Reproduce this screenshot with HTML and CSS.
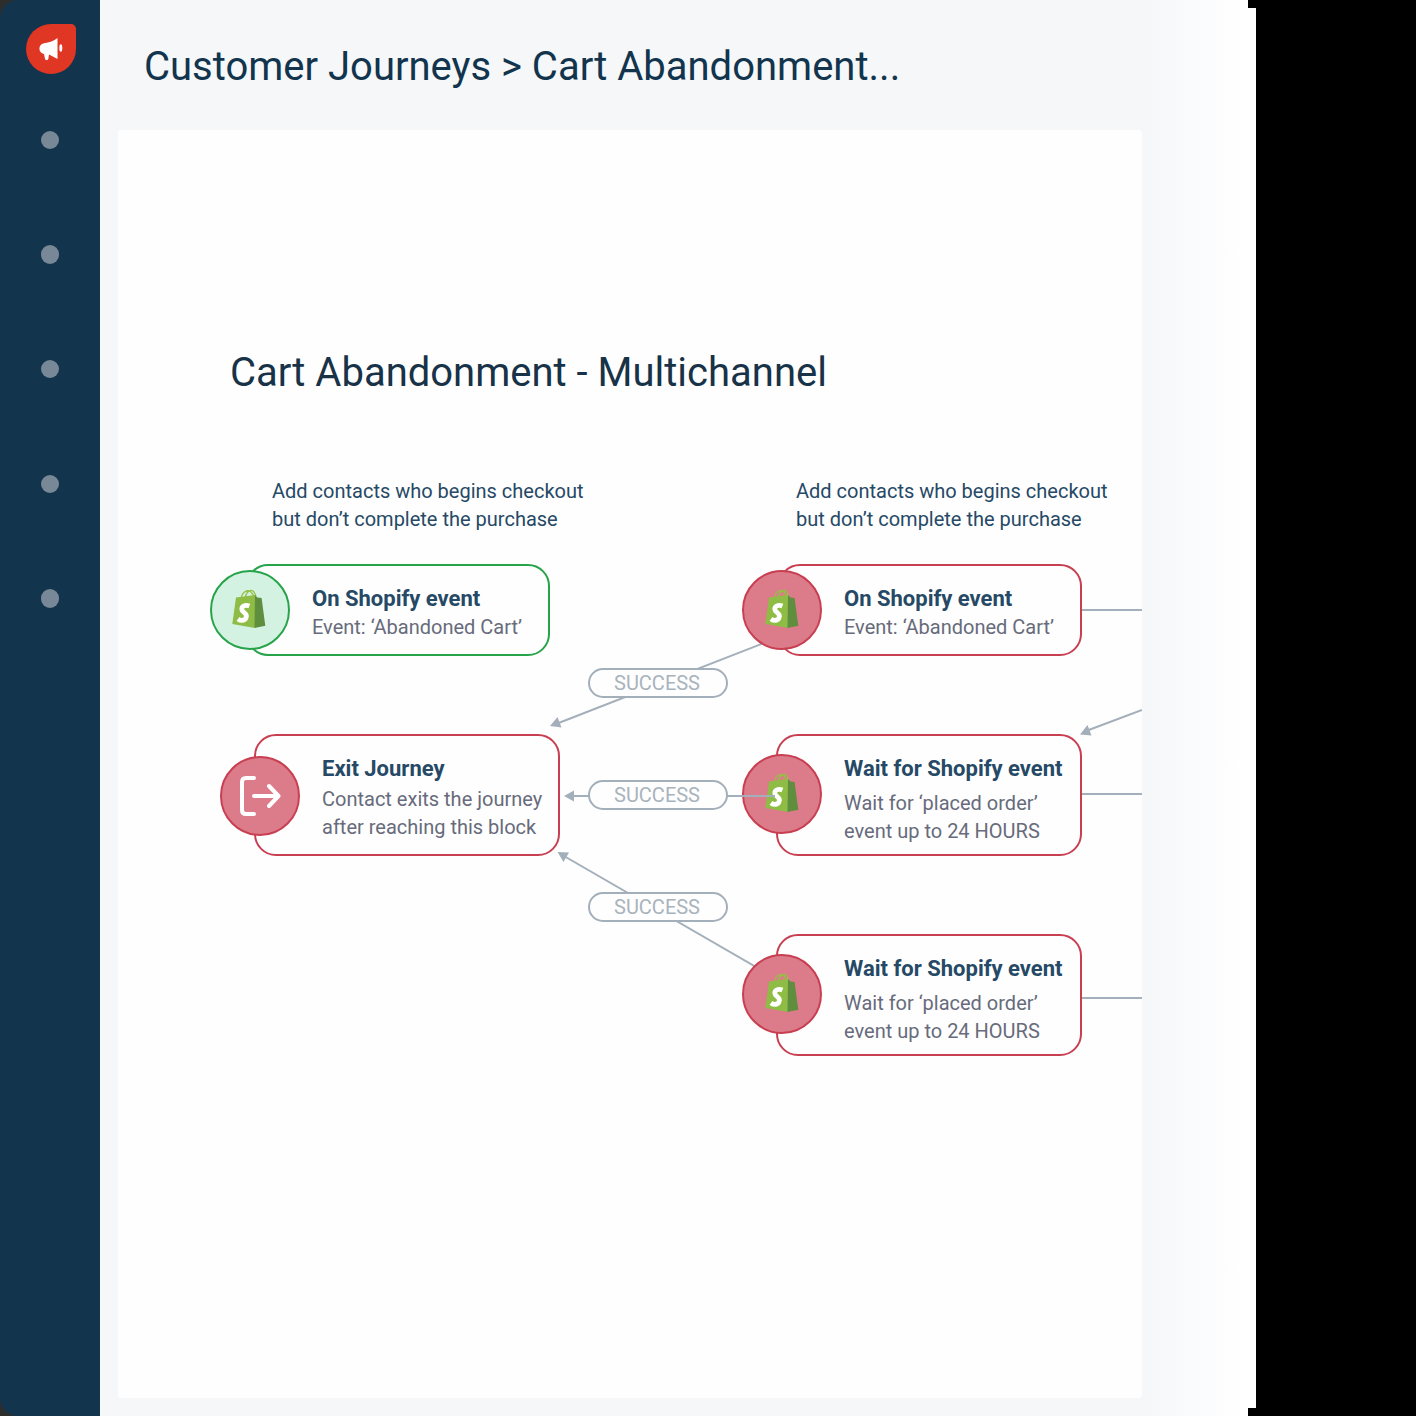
FILE: index.html
```html
<!DOCTYPE html>
<html lang="en">
<head>
<meta charset="utf-8">
<title>Customer Journeys</title>
<link rel="stylesheet" href="styles.css">
</head>
<body>
<svg class="defs" aria-hidden="true">
  <symbol id="bag" viewBox="0 0 80 80">
    <path d="M31 29C32 22 37 19 41 22C43 24 44 26 44 28M35 28C36 22 41 18 44 22L46 26" fill="none" stroke="#95bf47" stroke-width="1.3"/>
    <path d="M26 27.500L45 25V58L22.300 54Z" fill="#8ebc45"/>
    <path d="M45 25L47.500 27.500L51.600 28L55.300 55.700L44.500 58Z" fill="#5e8e3e"/>
    <path d="M39.400 36C35 34.300 31.600 36.200 31.800 39.300C32 42.300 36.600 42.500 36.400 46.200C36.200 50.400 31.500 51.600 28 49" fill="none" stroke="#fff" stroke-width="4.800"/>
  </symbol>
</svg>
<div class="window">
  <aside class="sidebar">
    <div class="logo">
      <svg viewBox="0 0 50 50"><path d="M31.500 14V35L23 30.500L22.500 34C22.300 37 19.400 36.500 19 35L18 30C12 29 11.800 20 18 19.200Q26 18.500 31.500 14Z" fill="#fff"/><ellipse cx="34.800" cy="24" rx="1.500" ry="3.800" fill="#fff"/></svg>
    </div>
    <nav class="dots"><i></i><i></i><i></i><i></i><i></i></nav>
  </aside>
  <main class="main">
    <header class="crumbs">Customer Journeys &gt; Cart Abandonment...</header>
    <section class="canvas">
      <h1 class="title">Cart Abandonment - Multichannel</h1>
      <p class="note note-a">Add contacts who begins checkout<br>but don’t complete the purchase</p>
      <p class="note note-b">Add contacts who begins checkout<br>but don’t complete the purchase</p>

      <svg class="wires" viewBox="118 130 1024 1268">
        <g stroke="#a3afba" stroke-width="2" fill="none">
          <path d="M782 636L556 724M782 982L564 856M1080 610H1142M1080 794H1142M1080 998H1142M1142 710L1086 731"/>
        </g>
        <g fill="#a3afba">
          <path d="M550 726L557.500 717L561.500 727.500ZM557.500 852L569 852.500L563.500 862ZM1080 734.500L1087.500 725L1091.500 735.500Z"/>
        </g>
      </svg>

      <article class="node green n1"><div class="badge"><svg><use href="#bag"/></svg></div><h2>On Shopify event</h2><p>Event: ‘Abandoned Cart’</p></article>
      <article class="node short n2"><div class="badge"><svg class="nudge"><use href="#bag"/></svg></div><h2>On Shopify event</h2><p>Event: ‘Abandoned Cart’</p></article>
      <article class="node exit n3"><div class="badge"><svg viewBox="0 0 80 80"><path d="M34 22H26Q22 22 22 26V54Q22 58 26 58H34M34 40H58M49 30L58.500 40L49 50" fill="none" stroke="#fff" stroke-width="4" stroke-linecap="round" stroke-linejoin="round"/></svg></div><h2>Exit Journey</h2><p>Contact exits the journey<br>after reaching this block</p></article>
      <article class="node wait n4"><div class="badge"><svg class="nudge"><use href="#bag"/></svg></div><h2>Wait for Shopify event</h2><p>Wait for ‘placed order’<br>event up to 24 HOURS</p></article>
      <article class="node wait n5"><div class="badge"><svg class="nudge"><use href="#bag"/></svg></div><h2>Wait for Shopify event</h2><p>Wait for ‘placed order’<br>event up to 24 HOURS</p></article>

      <svg class="wires" viewBox="118 130 1024 1268">
        <path d="M775 796H572" stroke="#a3afba" stroke-width="2"/><path d="M564 796L574 790.500V801.500Z" fill="#a3afba"/>
      </svg>
      <span class="pill p1">SUCCESS</span>
      <span class="pill p2">SUCCESS</span>
      <span class="pill p3">SUCCESS</span>
    </section>
  </main>
</div>
</body>
</html>
```
FILE: styles.css
```css
* { box-sizing: border-box; margin: 0; padding: 0; }
body { background: #000; font-family: Roboto, sans-serif; height: 1416px; overflow: hidden; }
.defs { position: absolute; width: 0; height: 0; }
.window {
  display: flex;
  width: 1256px;
  height: 1416px;
  background: #2e2d2d;
  clip-path: polygon(0 0, 1248px 0, 1248px 8px, 1256px 8px, 1256px 1408px, 1248px 1408px, 1248px 1416px, 0 1416px);
}
.sidebar {
  width: 100px;
  background: #12344d;
  border-radius: 18px 0 0 18px;
  display: flex;
  flex-direction: column;
  align-items: center;
  padding-top: 24px;
}
.logo { width: 50px; height: 50px; margin-left: 2px; background: #e03624; border-radius: 50% 5px 50% 50%; }
.logo svg { display: block; width: 50px; height: 50px; }
.dots { display: flex; flex-direction: column; gap: 96.200px; margin-top: 56.500px; }
.dots i { width: 18.500px; height: 18.500px; border-radius: 50%; background: #788896; }
.main {
  flex: 1;
  padding-left: 18px;
  background: linear-gradient(90deg, #f5f7f9 0, #f5f7f9 1042px, #fafbfd 1090px, #fdfdfe 1120px, #fff 1145px);
}
.crumbs { height: 130px; padding: 43px 0 0 26px; font-size: 40px; line-height: 48px; color: #12344d; white-space: nowrap; }
.canvas { position: relative; width: 1024px; height: 1268px; border-radius: 3px; overflow: hidden; background: #fefefe; }
.title { position: absolute; left: 112px; top: 219px; font-size: 40px; line-height: 48px; font-weight: 400; color: #183247; white-space: nowrap; }
.note { position: absolute; top: 347px; font-size: 20px; line-height: 28px; color: #264966; white-space: nowrap; }
.note-a { left: 154px; }
.note-b { left: 678px; }
.wires { position: absolute; inset: 0; width: 1024px; height: 1268px; }
.node {
  position: absolute;
  border: 2px solid #c83f51;
  border-radius: 22px;
  width: 306px;
  height: 122px;
  padding: 19px 0 0 66px;
  white-space: nowrap;
}
.node h2 { font-size: 22px; line-height: 28px; font-weight: 700; color: #264966; }
.node p { font-size: 20px; line-height: 28px; color: #676b7b; }
.badge { position: absolute; width: 80px; height: 80px; left: -36px; top: 18px; border: 2px solid #c83f51; border-radius: 50%; background: #dc7c8a; }
.badge svg { display: block; width: 80px; height: 80px; margin: -2px; }
.badge .nudge { margin-left: -1.500px; }
.green { border-color: #27a34a; }
.green .badge { border-color: #27a34a; background: #d3f2e2; }
.n1, .n2 { width: 304px; height: 92px; padding-left: 64px; }
.n1 .badge, .n2 .badge { left: -38px; top: 4px; }
.n1 { left: 128px; top: 434px; }
.n2 { left: 660px; top: 434px; }
.n3 { left: 136px; top: 604px; }
.n4 { left: 658px; top: 604px; }
.n5 { left: 658px; top: 804px; }
.exit .badge { top: 20px; }
.exit p { padding-top: 2px; }
.wait p { padding-top: 6px; }
.pill {
  position: absolute;
  left: 470px;
  width: 140px;
  height: 30px;
  border: 2px solid #a3afba;
  border-radius: 15px;
  background: #fefefe;
  font-size: 20px;
  line-height: 27px;
  text-align: center;
  padding-right: 2px;
  font-weight: 400;
  color: #a9b3bc;
}
.p1 { top: 538px; }
.p2 { top: 650px; }
.p3 { top: 762px; }
```
